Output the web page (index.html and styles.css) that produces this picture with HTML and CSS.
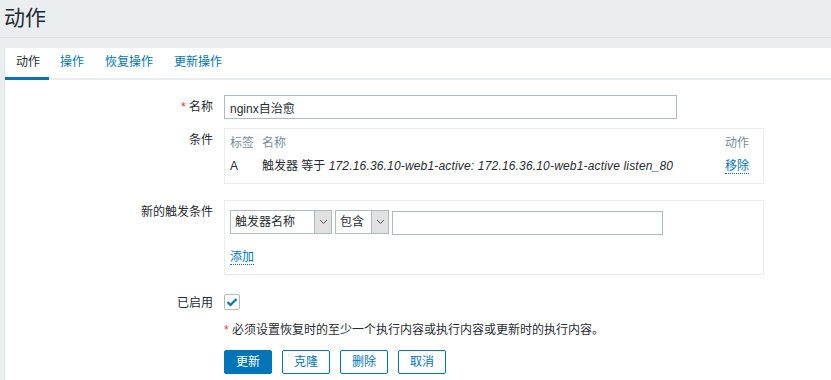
FILE: index.html
```html
<!DOCTYPE html>
<html lang="zh-CN">
<head>
  <meta charset="UTF-8">
  <title>动作</title>
  <link rel="stylesheet" href="styles.css">
</head>
<body>
  <header class="page-header">
    <h1>动作</h1>
  </header>

  <main class="container">
    <ul class="tabs">
      <li class="active"><a href="#">动作</a></li>
      <li><a href="#">操作</a></li>
      <li><a href="#">恢复操作</a></li>
      <li><a href="#">更新操作</a></li>
    </ul>

    <form class="form-list">
      <div class="form-row row-name">
        <label class="form-label"><span class="required">*</span> 名称</label>
        <div class="form-field">
          <input class="text-input name-input" type="text" value="nginx自治愈">
        </div>
      </div>

      <div class="form-row row-cond">
        <label class="form-label">条件</label>
        <div class="form-field">
          <div class="box cond-box">
            <div class="cond-table">
              <div class="th">标签</div>
              <div class="th">名称</div>
              <div class="th th-action">动作</div>
              <div class="td">A</div>
              <div class="td">触发器 等于 <i>172.16.36.10-web1-active: 172.16.36.10-web1-active listen_80</i></div>
              <div class="td"><a class="link" href="#">移除</a></div>
            </div>
          </div>
        </div>
      </div>

      <div class="form-row row-new">
        <label class="form-label">新的触发条件</label>
        <div class="form-field">
          <div class="box new-box">
            <div class="new-line">
              <div class="select select-wide">
                <span class="select-text">触发器名称</span>
                <span class="select-arrow"><svg width="9" height="6" viewBox="0 0 9 6"><path d="M1 1l3.5 3.5L8 1" fill="none" stroke="#555" stroke-width="1"/></svg></span>
              </div>
              <div class="select select-small">
                <span class="select-text">包含</span>
                <span class="select-arrow"><svg width="9" height="6" viewBox="0 0 9 6"><path d="M1 1l3.5 3.5L8 1" fill="none" stroke="#555" stroke-width="1"/></svg></span>
              </div>
              <input class="text-input value-input" type="text">
            </div>
            <a class="link" href="#">添加</a>
          </div>
        </div>
      </div>

      <div class="form-row row-enabled">
        <label class="form-label">已启用</label>
        <div class="form-field">
          <span class="checkbox">
            <svg width="12" height="10" viewBox="0 0 12 10"><path d="M1.5 5l3 3L10.5 2" fill="none" stroke="#0275b8" stroke-width="2.2"/></svg>
          </span>
        </div>
      </div>

      <div class="form-row row-note">
        <div class="form-label"></div>
        <div class="form-field note"><span class="required">*</span> 必须设置恢复时的至少一个执行内容或执行内容或更新时的执行内容。</div>
      </div>

      <div class="form-row row-buttons">
        <div class="form-label"></div>
        <div class="form-field buttons">
          <button type="button" class="btn btn-primary">更新</button>
          <button type="button" class="btn">克隆</button>
          <button type="button" class="btn">删除</button>
          <button type="button" class="btn">取消</button>
        </div>
      </div>
    </form>
  </main>
</body>
</html>
```

FILE: styles.css
```css
:root {
  --bg: #ebeef0;
  --line: #dfe4e7;
  --text: #1f2c33;
  --muted: #768d99;
  --blue: #0275b8;
  --red: #e33734;
  --input-border: #acbbc2;
}

body {
  margin: 0;
  padding: 0;
  background-color: var(--bg);
  color: var(--text);
  font-family: "Liberation Sans", "Noto Sans CJK SC", sans-serif;
  font-size: 12px;
  line-height: 14px;
  overflow: hidden;
}

.page-header {
  padding: 6px 4px 7px;
  border-bottom: 1px solid var(--line);
}

.page-header h1 {
  margin: 0;
  font-size: 21px;
  line-height: 24px;
  font-weight: normal;
}

.container {
  margin: 10px 0 0 4px;
  background: #fff;
  border-left: 1px solid var(--line);
  min-height: 340px;
}

.tabs {
  display: flex;
  list-style: none;
  margin: 0;
  padding: 0;
  height: 30px;
  border-bottom: 2px solid var(--bg);
}

.tabs li {
  border-bottom: 3px solid transparent;
  margin-bottom: -2px;
}

.tabs li.active {
  border-bottom-color: var(--blue);
}

.tabs a {
  display: block;
  padding: 0 10px 0 11px;
  line-height: 29px;
  color: var(--blue);
  text-decoration: none;
}

.tabs li.active a {
  color: var(--text);
  padding-right: 9px;
}

.form-list {
  padding-top: 15px;
}

.form-row {
  display: flex;
}

.form-label {
  width: 208px;
  flex: none;
  text-align: right;
  line-height: 24px;
  margin-right: 11px;
}

.form-field {
  flex: 1;
}

.required {
  color: var(--red);
}

.row-name { margin-bottom: 9px; }
.row-cond { margin-bottom: 16px; }
.row-new { margin-bottom: 16px; }
.row-enabled { margin-bottom: 8px; }
.row-note { margin-bottom: 13px; }
.row-note .form-label { line-height: 14px; }

.text-input {
  box-sizing: border-box;
  height: 24px;
  border: 1px solid var(--input-border);
  padding: 0 5px;
  font: inherit;
  color: var(--text);
  outline: none;
  margin: 0;
}

.name-input {
  width: 453px;
}

.box {
  box-sizing: border-box;
  width: 540px;
  border: 1px solid #ebebeb;
}

.cond-box {
  padding: 5px 14px 5px 5px;
}

.cond-table {
  display: grid;
  grid-template-columns: 32px 1fr auto;
}

.th {
  color: var(--muted);
  padding: 2px 0;
}

.td {
  padding: 7px 0 5px;
}

.td i {
  font-style: italic;
  letter-spacing: 0.17px;
}

.link {
  color: var(--blue);
  text-decoration: none;
  border-bottom: 1px dotted var(--blue);
}

.new-box {
  height: 75px;
  padding: 9px 5px 10px;
}

.new-line {
  display: flex;
  gap: 3px;
  margin-bottom: 15px;
}

.select {
  box-sizing: border-box;
  display: flex;
  height: 24px;
  border: 1px solid var(--input-border);
  background: #fff;
}

.select-wide { width: 102px; }
.select-small { width: 54px; }

.select-text {
  flex: 1;
  padding-left: 4px;
  line-height: 22px;
}

.select-arrow {
  width: 16px;
  display: flex;
  align-items: center;
  justify-content: center;
  background: #e1e1e1;
  border-left: 1px solid var(--input-border);
}

.value-input {
  width: 271px;
  margin-top: 1px;
}

.checkbox {
  box-sizing: border-box;
  display: flex;
  align-items: center;
  justify-content: center;
  width: 16px;
  height: 16px;
  margin-top: 3px;
  border: 1px solid var(--input-border);
  border-radius: 2px;
  background: #fff;
}

.buttons {
  display: flex;
  gap: 10px;
}

.btn {
  box-sizing: border-box;
  width: 48px;
  height: 24px;
  padding: 0;
  border: 1px solid var(--blue);
  border-radius: 2px;
  background: #fff;
  color: var(--blue);
  font: inherit;
}

.btn-primary {
  background: var(--blue);
  color: #fff;
}
```
